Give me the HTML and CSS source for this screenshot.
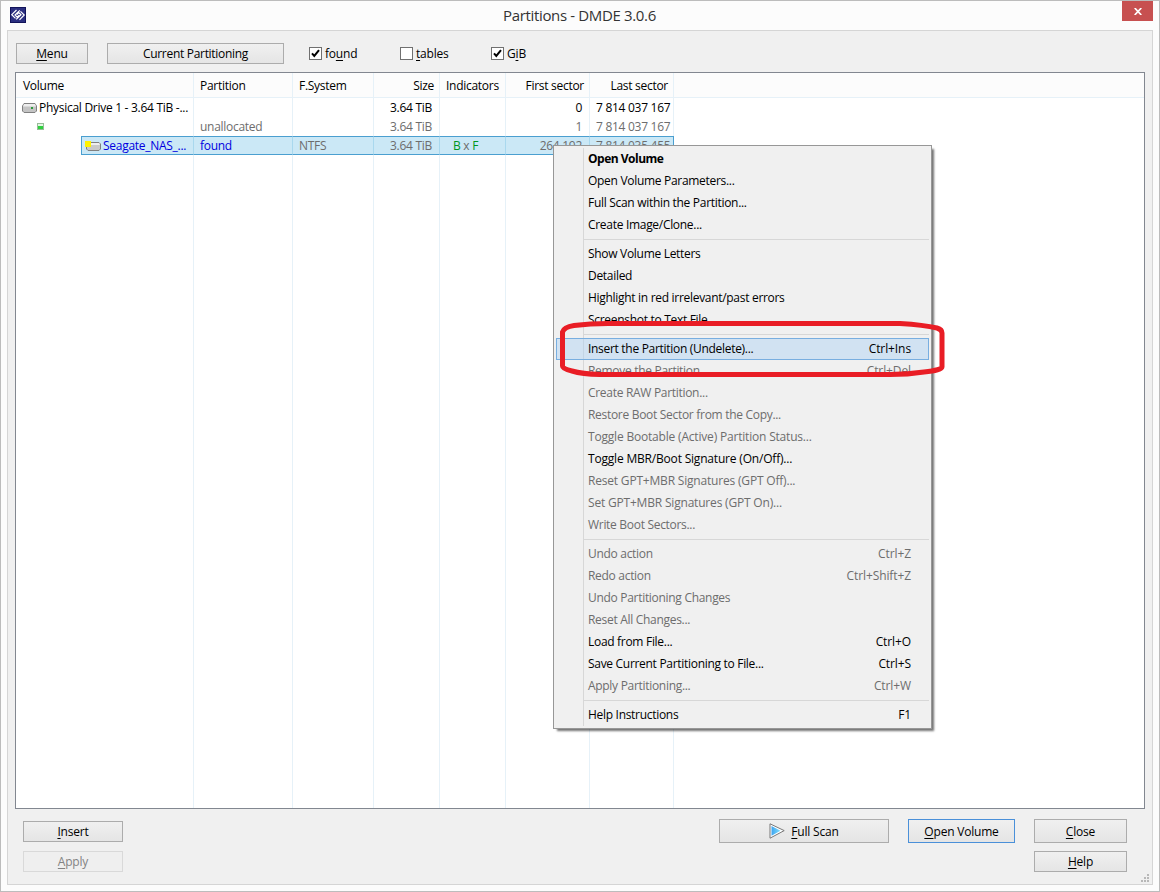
FILE: index.html
```html
<!DOCTYPE html>
<html lang="en">

<head>
    <meta charset="UTF-8">
    <title>Partitions - DMDE 3.0.6</title>
    <link rel="stylesheet" href="styles.css">
</head>

<body>

    <div class="window">
        <div class="titlebar">
            <svg class="app-icon" width="16" height="16" viewBox="0 0 16 16">
                <rect width="16" height="16" fill="#12145a"/>
                <rect x="1" y="1" width="14" height="14" fill="#2b2f80"/>
                <g fill="none" stroke="#fff" stroke-width="1.2">
                    <path d="M6.5 3L1.8 7.7L5.5 11.4M9.5 12.8L14.2 8L10.5 4.4"/>
                    <path d="M9.8 3.4L5 8L7.2 10.2L9.2 8.2M6.2 12.4L11 7.8L8.8 5.6L6.8 7.6"/>
                </g>
            </svg>
            <h1>Partitions - DMDE 3.0.6</h1>
            <div class="close-btn">
                <svg width="8" height="7" viewBox="0 0 8 7"><path d="M.7 0L7.3 7M7.3 0L.7 7" stroke="#fff" stroke-width="1.7"/></svg>
            </div>
        </div>

        <div class="client">
            <div class="toolbar">
                <button class="btn menu-btn"><u>M</u>enu</button>
                <button class="btn current-btn">Current Partitioning</button>
                <label class="check"><span class="box"><svg width="11" height="11" viewBox="0 0 11 11"><path d="M2 5.3L4.3 8L9 2.2" fill="none" stroke="#000" stroke-width="2"/></svg></span><span>fo<u>u</u>nd</span></label>
                <label class="check"><span class="box"></span><span><u>t</u>ables</span></label>
                <label class="check"><span class="box"><svg width="11" height="11" viewBox="0 0 11 11"><path d="M2 5.3L4.3 8L9 2.2" fill="none" stroke="#000" stroke-width="2"/></svg></span><span>G<u>i</u>B</span></label>
            </div>

            <div class="list">
                <div class="row head">
                    <span>Volume</span><span>Partition</span><span>F.System</span><span class="num">Size</span><span>Indicators</span><span class="num">First sector</span><span class="num">Last sector</span>
                </div>
                <div class="row">
                    <span class="vol"><svg width="15" height="10" viewBox="0 0 15 10"><path d="M2 .5H13L14.5 3V8L13 9.5H2L.5 8V3Z" fill="#c4c4c4" stroke="#808080"/><path d="M2 1H13L14 3.5H1Z" fill="#eee"/><rect x="9" y="4" width="2" height="2" fill="#2a9a3a"/></svg>Physical Drive 1 - 3.64 TiB -...</span>
                    <span></span><span></span><span class="num">3.64 TiB</span><span></span><span class="num">0</span><span class="num">7 814 037 167</span>
                </div>
                <div class="row dim">
                    <span class="vol free"><svg width="7" height="7" viewBox="0 0 7 7"><rect x=".5" y=".5" width="6" height="6" fill="#e4f6e4" stroke="#9b9"/><rect x="1" y="3" width="5" height="3" fill="#2fd03f"/></svg></span>
                    <span>unallocated</span><span></span><span class="num">3.64 TiB</span><span></span><span class="num">1</span><span class="num">7 814 037 167</span>
                </div>
                <div class="row dim selected">
                    <span class="vol part"><svg width="16" height="10" viewBox="0 0 16 10"><path d="M3 1.5H14L15.5 3V8L14 9.5H3L1.5 8V3Z" fill="#c9c9c9" stroke="#808080"/><path d="M3 2H14L15 4H2Z" fill="#eee"/><rect width="6" height="6" fill="#fff200"/></svg>Seagate_NAS_...</span>
                    <span class="blue">found</span><span>NTFS</span><span class="num">3.64 TiB</span><span class="ind"><i>B</i> x <i>F</i></span><span class="num">264 192</span><span class="num">7 814 035 455</span>
                </div>
                <div class="row filler">
                    <span></span><span></span><span></span><span></span><span></span><span></span><span></span>
                </div>
            </div>

            <div class="footer">
                <div class="stack left">
                    <button class="btn"><u>I</u>nsert</button>
                    <button class="btn" disabled><u>A</u>pply</button>
                </div>
                <button class="btn tall scan-btn"><svg width="16" height="16" viewBox="0 0 16 16"><defs><linearGradient id="play"><stop offset="0" stop-color="#3fa4ee"/><stop offset="1" stop-color="#7fe0ff"/></linearGradient></defs><path d="M1 .8L15.2 7.6L1 15.2Z" fill="#fff" stroke="#777"/><path d="M2.5 3L11.5 7.7L2.5 12.8Z" fill="url(#play)"/></svg><span><u>F</u>ull Scan</span></button>
                <button class="btn tall open-btn"><u>O</u>pen Volume</button>
                <div class="stack right">
                    <button class="btn tall"><u>C</u>lose</button>
                    <button class="btn"><u>H</u>elp</button>
                </div>
            </div>
            <svg class="grip" width="8" height="8" viewBox="0 0 8 8" fill="#b8b8b8"><path d="M6 0h2v2H6zM3 3h2v2H3zM6 3h2v2H6zM0 6h2v2H0zM3 6h2v2H3zM6 6h2v2H6z"/></svg>
        </div>

        <div class="context-menu">
            <div class="item default">Open Volume</div>
            <div class="item">Open Volume Parameters...</div>
            <div class="item">Full Scan within the Partition...</div>
            <div class="item">Create Image/Clone...</div>
            <hr>
            <div class="item">Show Volume Letters</div>
            <div class="item">Detailed</div>
            <div class="item">Highlight in red irrelevant/past errors</div>
            <div class="item">Screenshot to Text File</div>
            <hr>
            <div class="item hot">Insert the Partition (Undelete)...<span>Ctrl+Ins</span></div>
            <div class="item off">Remove the Partition<span>Ctrl+Del</span></div>
            <div class="item off">Create RAW Partition...</div>
            <div class="item off">Restore Boot Sector from the Copy...</div>
            <div class="item off wide">Toggle Bootable (Active) Partition Status...</div>
            <div class="item wide">Toggle MBR/Boot Signature (On/Off)...</div>
            <div class="item off wide">Reset GPT+MBR Signatures (GPT Off)...</div>
            <div class="item off wide">Set GPT+MBR Signatures (GPT On)...</div>
            <div class="item off">Write Boot Sectors...</div>
            <hr>
            <div class="item off">Undo action<span>Ctrl+Z</span></div>
            <div class="item off">Redo action<span>Ctrl+Shift+Z</span></div>
            <div class="item off">Undo Partitioning Changes</div>
            <div class="item off">Reset All Changes...</div>
            <div class="item">Load from File...<span>Ctrl+O</span></div>
            <div class="item">Save Current Partitioning to File...<span>Ctrl+S</span></div>
            <div class="item off">Apply Partitioning...<span>Ctrl+W</span></div>
            <hr>
            <div class="item">Help Instructions<span>F1</span></div>
        </div>

        <!-- red marker around the Insert item -->
        <svg class="marker" width="390" height="60" viewBox="0 0 390 60">
            <path d="M6.5 12Q8 7 18 5.5Q34 3.5 52 3.5H344Q368 5 381 8Q386 9.500 386 13V47Q386 50 368 52Q352 54.500 334 54.500H44Q26 54 16 51Q6.500 49 6.500 46Z" fill="none" stroke="#e91d25" stroke-width="5" stroke-linejoin="round"/>
        </svg>
    </div>

</body>

</html>
```
FILE: styles.css
```css
* {
    box-sizing: border-box;
}

body {
    margin: 0;
    font-family: "Open Sans", "Noto Sans", sans-serif;
    font-size: 12px;
    letter-spacing: -0.2px;
    color: #000;
}

u {
    text-underline-offset: 2px;
    text-decoration-thickness: 1px;
}

.window {
    position: relative;
    display: flex;
    flex-direction: column;
    width: 1160px;
    height: 892px;
    padding: 0 6px 6px;
    background: #fcfcfc;
    border: 1px solid #bcbcbc;
}

.titlebar {
    display: flex;
    justify-content: space-between;
    height: 29px;
}

.app-icon {
    margin: 6px 0 0 3px;
}

h1 {
    margin: 0 0 0 11px;
    font-size: 15px;
    font-weight: 400;
    line-height: 29px;
    letter-spacing: -0.35px;
    color: #333;
}

.close-btn {
    display: flex;
    align-items: center;
    justify-content: center;
    width: 31px;
    height: 20px;
    background: #c75050;
}

.client {
    position: relative;
    display: flex;
    flex-direction: column;
    flex: 1;
    padding: 12px 7px 0;
    background: #f0f0f0;
    border: 1px solid #d5d5d5;
}

/* buttons */

.btn {
    display: flex;
    align-items: center;
    justify-content: center;
    height: 21px;
    padding: 0;
    font: inherit;
    letter-spacing: inherit;
    color: #000;
    background: linear-gradient(#f0f0f0, #e5e5e5);
    border: 1px solid #acacac;
}

.btn:disabled {
    color: #838383;
    background: #efefef;
    border-color: #d9d9d9;
}

.tall {
    height: 24px;
}

.toolbar {
    display: flex;
    align-items: center;
    height: 21px;
    padding-left: 1px;
}

.menu-btn {
    width: 72px;
    margin-right: 19px;
}

.current-btn {
    width: 177px;
    margin-right: 25px;
    letter-spacing: -0.3px;
}

.check {
    display: flex;
    align-items: center;
    gap: 3px;
    width: 91px;
}

.box {
    width: 13px;
    height: 13px;
    background: #fff;
    border: 1px solid #707070;
}

.box svg {
    display: block;
}

/* partition list */

.list {
    display: flex;
    flex-direction: column;
    height: 737px;
    margin-top: 8px;
    background: #fff;
    border: 1px solid #828790;
}

.row {
    display: grid;
    grid-template-columns: 178px 99px 81px 66px 66px 84px 84px;
    height: 19px;
    line-height: 19px;
    letter-spacing: -0.28px;
}

.row > span {
    padding: 0 6px;
    white-space: nowrap;
    border-right: 1px solid #e6f1f8;
}

.row > .num {
    padding-right: 7px;
    text-align: right;
}

.head {
    height: 25px;
    line-height: 25px;
    background: #fcfcfc;
    border-bottom: 1px solid #e6f1f8;
}

.head > .num {
    padding-right: 5px;
}

.head > span:first-child {
    padding-left: 7px;
}

.row > .vol {
    display: flex;
    align-items: center;
    gap: 2px;
    padding: 0 0 0 6px;
}

.row > .free {
    padding-left: 21px;
}

.dim {
    color: #6d6d6d;
}

.selected > span {
    line-height: 17px;
    background: #cbe8f6;
    border-top: 1px solid #4a9fd0;
    border-bottom: 1px solid #4a9fd0;
    border-right-color: #a9d8ee;
}

.selected > span:last-child {
    border-right-color: #4a9fd0;
}

.row > .part {
    margin-left: 65px;
    padding-left: 3px;
    color: #0000e0;
    border-left: 1px solid #4a9fd0;
}

.row > .blue {
    color: #0000e0;
}

.row > .ind {
    padding-left: 13px;
}

.ind i {
    font-style: normal;
    color: #00961e;
}

.filler {
    flex: 1;
}

/* bottom buttons */

.footer {
    display: flex;
    align-items: flex-start;
    padding: 10px 17px 0 8px;
}

.stack {
    display: flex;
    flex-direction: column;
}

.left {
    gap: 9px;
    width: 100px;
    margin: 2px 596px 0 0;
}

.right {
    gap: 8px;
    width: 93px;
}

.scan-btn {
    gap: 6px;
    width: 170px;
    margin-right: 19px;
}

.open-btn {
    width: 107px;
    margin-right: 19px;
    border-color: #4a90d9;
}

.grip {
    position: absolute;
    right: 3px;
    bottom: 2px;
}

/* popup menu */

.context-menu {
    position: absolute;
    left: 552px;
    top: 144px;
    width: 379px;
    padding: 2px;
    letter-spacing: -0.3px;
    background: linear-gradient(to right, transparent 27px, #d7d7d7 27px, #d7d7d7 28px, transparent 28px) 2px 2px / 373px 578px no-repeat #f0f0f0;
    border: 1px solid #979797;
    box-shadow: 3px 3px 2px -1px rgba(0, 0, 0, 0.55);
}

.item {
    display: flex;
    justify-content: space-between;
    height: 22px;
    padding: 0 18px 0 32px;
    line-height: 22px;
}

.item span {
    letter-spacing: -0.1px;
}

.wide {
    letter-spacing: -0.19px;
}

.context-menu hr {
    height: 1px;
    margin: 3px 0 3px 28px;
    background: #d7d7d7;
    border: none;
}

.default {
    font-weight: 700;
    letter-spacing: -0.5px;
}

.off {
    color: #6d6d6d;
}

.hot {
    padding: 0 17px 0 31px;
    line-height: 20px;
    background: rgba(170, 208, 245, 0.45);
    border: 1px solid #78aee0;
}

.marker {
    position: absolute;
    left: 555px;
    top: 319px;
}
```
